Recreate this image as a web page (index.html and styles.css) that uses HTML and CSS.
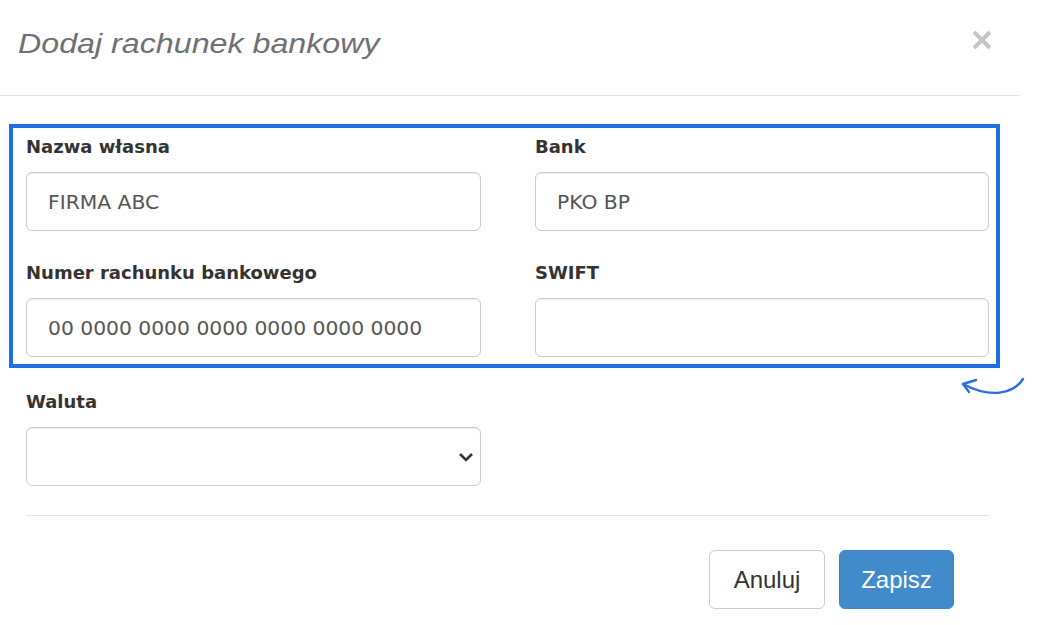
FILE: index.html
```html
<!DOCTYPE html>
<html lang="pl">
<head>
  <meta charset="UTF-8">
  <meta name="viewport" content="width=device-width, initial-scale=1.0">
  <title>Dodaj rachunek bankowy</title>
  <link rel="stylesheet" href="styles.css">
</head>
<body>
  <div class="modal">
    <div class="modal-header">
      <h4 class="modal-title">Dodaj rachunek bankowy</h4>
      <button class="close" type="button" aria-label="Zamknij">
        <svg width="22" height="20" viewBox="0 0 22 20">
          <path d="M3 2 L19 18 M19 2 L3 18" stroke="#c6c6c6" stroke-width="4" fill="none"/>
        </svg>
      </button>
    </div>

    <div class="modal-body">
      <div class="highlight">
        <div class="row">
          <div class="form-group">
            <label for="name">Nazwa własna</label>
            <input type="text" id="name" value="FIRMA ABC">
          </div>
          <div class="form-group">
            <label for="bank">Bank</label>
            <input type="text" id="bank" value="PKO BP">
          </div>
        </div>
        <div class="row">
          <div class="form-group">
            <label for="account">Numer rachunku bankowego</label>
            <input type="text" id="account" value="00 0000 0000 0000 0000 0000 0000">
          </div>
          <div class="form-group">
            <label for="swift">SWIFT</label>
            <input type="text" id="swift" value="">
          </div>
        </div>
      </div>

      <div class="form-group currency">
        <label for="currency">Waluta</label>
        <div class="select-wrap">
          <select id="currency">
            <option value=""></option>
          </select>
          <svg class="chevron" width="16" height="10" viewBox="0 0 16 10">
            <path d="M2 2 L8 8 L14 2" stroke="#333" stroke-width="2.6" fill="none"/>
          </svg>
        </div>
      </div>

      <div class="modal-footer">
        <button class="btn btn-default" type="button">Anuluj</button>
        <button class="btn btn-primary" type="button">Zapisz</button>
      </div>
    </div>

    <svg class="arrow" width="75" height="35" viewBox="0 0 75 35">
      <path d="M68 9 C60 22, 38 30, 8 14" stroke="#2a6fe0" stroke-width="2.4" fill="none" stroke-linecap="round"/>
      <path d="M21 10 L8 14 L14 22" stroke="#2a6fe0" stroke-width="2.4" fill="none" stroke-linecap="round" stroke-linejoin="round"/>
    </svg>
  </div>
</body>
</html>
```

FILE: styles.css
```css
* { box-sizing: border-box; margin: 0; padding: 0; }
body { background: #fff; font-family: "DejaVu Sans", Verdana, sans-serif; }

.modal {
  position: relative;
  width: 1020px;
}

.modal-header {
  display: flex;
  justify-content: space-between;
  align-items: flex-start;
  padding: 27px 27px 36px 18px;
  border-bottom: 1px solid #e5e5e5;
}
.modal-title {
  font-family: "Liberation Sans", Arial, sans-serif;
  font-style: italic;
  font-weight: normal;
  font-size: 28.5px;
  line-height: 32px;
  color: #6f7075;
  transform: scaleX(1.13);
  transform-origin: left center;
}
.close {
  border: none;
  background: none;
  margin-top: 3px;
  cursor: pointer;
  display: flex;
}

.modal-body { padding: 28px 20px 0 9px; }

.highlight {
  border: 4px solid #1f6fe6;
  padding: 8px 7px 7px 13px;
}
.row {
  display: grid;
  grid-template-columns: 455px 1fr;
  column-gap: 54px;
}
.row + .row { margin-top: 31px; }

label {
  display: block;
  font-weight: bold;
  font-size: 18px;
  line-height: 22px;
  color: #333;
  margin-bottom: 14px;
}
input, select {
  display: block;
  width: 100%;
  height: 59px;
  padding: 0 21px;
  border: 1px solid #ccc;
  border-radius: 6px;
  box-shadow: inset 0 1px 1px rgba(0,0,0,0.075);
  font-family: "DejaVu Sans", Verdana, sans-serif;
  font-size: 20.3px;
  color: #555;
  background: #fff;
}
select { appearance: none; -webkit-appearance: none; }

.currency {
  width: 455px;
  margin: 23px 0 0 17px;
}
.select-wrap { position: relative; }
.chevron {
  position: absolute;
  right: 7px;
  top: 25px;
}

.modal-footer {
  margin: 29px 11px 0 17px;
  padding: 34px 35px 0 0;
  border-top: 1px solid #e5e5e5;
  display: flex;
  justify-content: flex-end;
  gap: 14px;
}
.btn {
  height: 59px;
  width: 116px;
  border-radius: 6px;
  font-family: "Liberation Sans", Arial, sans-serif;
  font-size: 24px;
  cursor: pointer;
}
.btn-default {
  background: #fff;
  border: 1px solid #ccc;
  color: #333;
}
.btn-primary {
  width: 115px;
  background: #428bca;
  border: 1px solid #3f86c5;
  color: #fff;
}

.arrow {
  position: absolute;
  left: 955px;
  top: 370px;
}
```
